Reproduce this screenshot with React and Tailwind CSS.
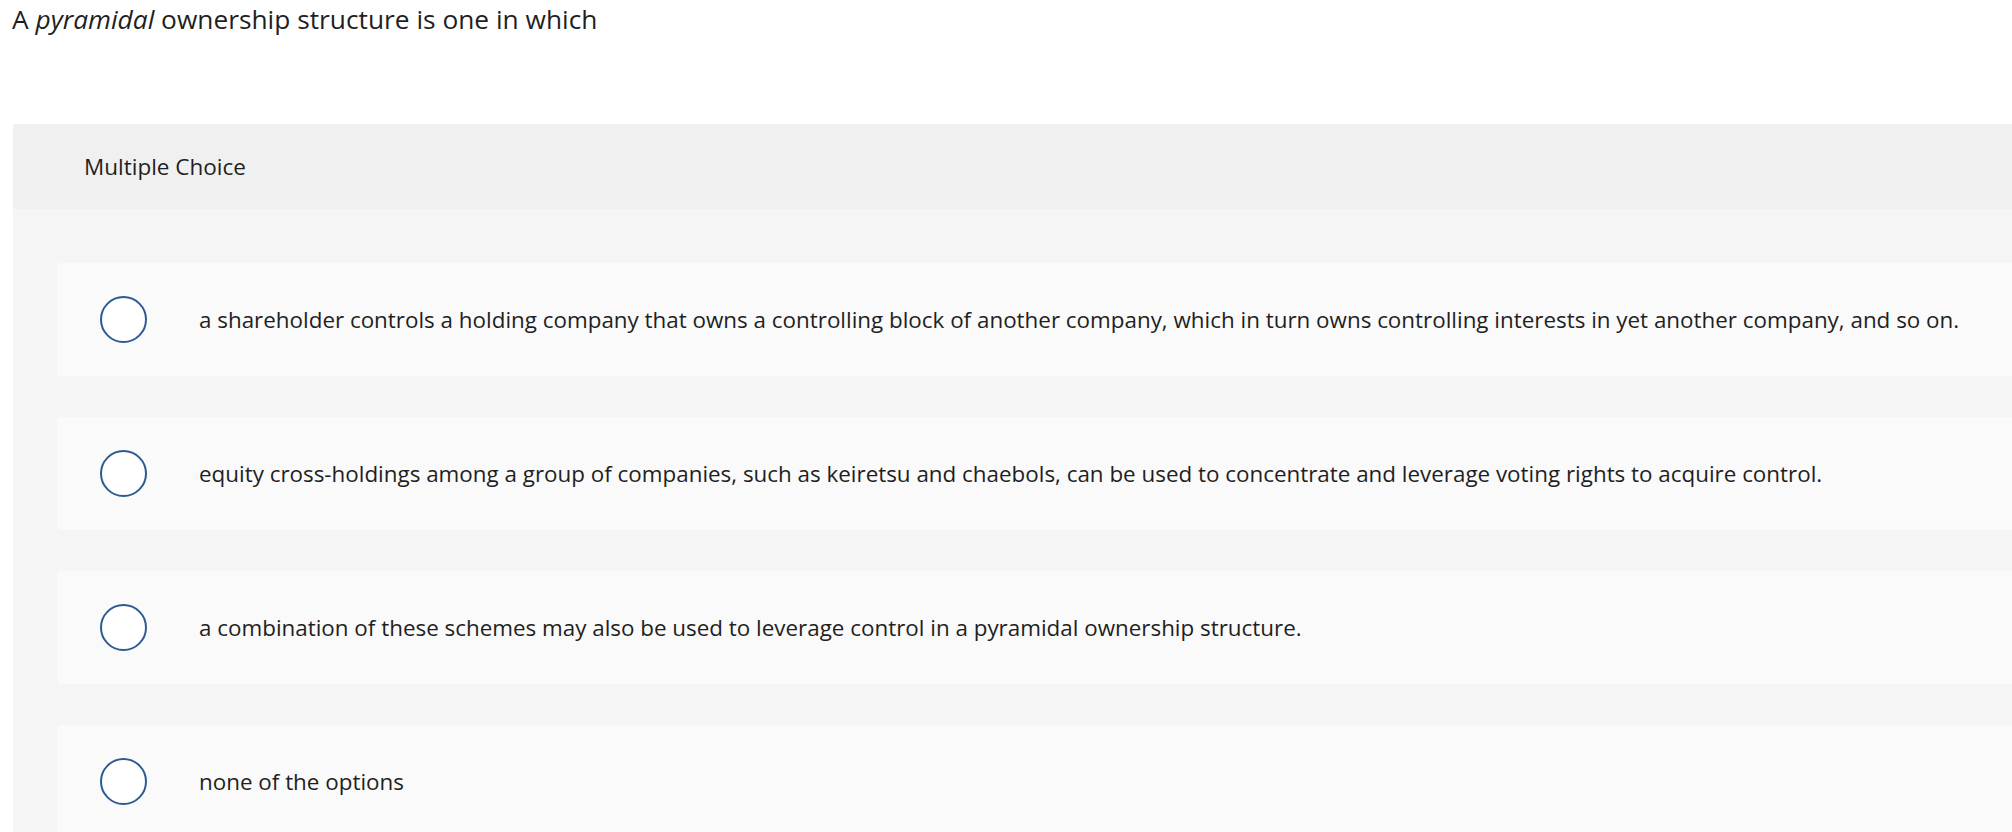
import React from 'react';

const options = [
  'a shareholder controls a holding company that owns a controlling block of another company, which in turn owns controlling interests in yet another company, and so on.',
  'equity cross-holdings among a group of companies, such as keiretsu and chaebols, can be used to concentrate and leverage voting rights to acquire control.',
  'a combination of these schemes may also be used to leverage control in a pyramidal ownership structure.',
  'none of the options',
];

const App = () => {
  return (
    <div
      className="w-[2012px] h-[832px] overflow-hidden bg-white text-[#1f1f1f]"
      style={{ fontFamily: '"Open Sans", Lato, sans-serif' }}
    >
      {/* Question */}
      <div className="pl-[12px] pt-[1px] h-[124px] text-[26.3px] leading-[36px]">
        A <em className="italic">pyramidal</em> ownership structure is one in which
      </div>

      {/* Answer panel */}
      <div className="ml-[13px] bg-[#f5f5f5] rounded-tl-[3px]">
        <div className="h-[85px] bg-[#f0f0f0] flex items-center pl-[71px] text-[22.5px] rounded-tl-[3px]">
          Multiple Choice
        </div>

        <div className="pt-[54px] pl-[44px] flex flex-col gap-[41px]">
          {options.map((text, i) => (
            <div
              key={i}
              className="h-[113px] bg-[#fafafa] rounded-l-[4px] flex items-center pl-[43px]"
            >
              <div className="w-[47px] h-[47px] shrink-0 rounded-full border-2 border-[#2c5b93] bg-white" />
              <span className="ml-[52px] text-[22.4px] whitespace-nowrap">{text}</span>
            </div>
          ))}
        </div>
      </div>
    </div>
  );
};

export default App;
